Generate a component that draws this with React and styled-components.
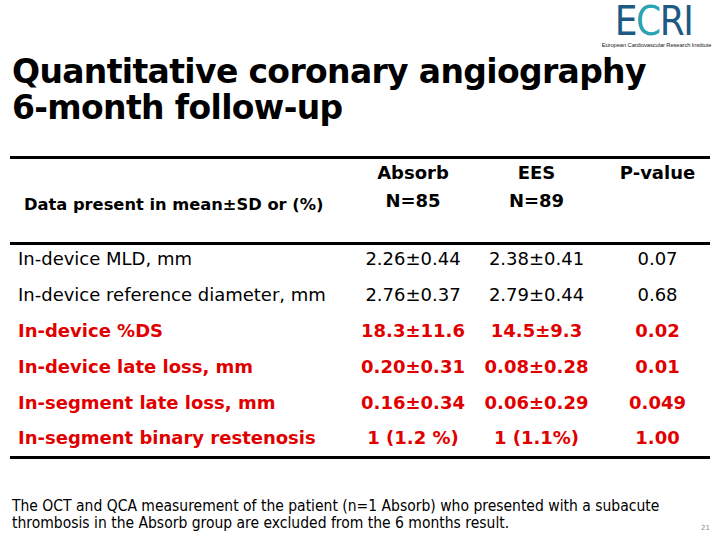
import React from "react"
import styled, { createGlobalStyle } from "styled-components"

const GlobalStyle = createGlobalStyle`
	body {
		margin: 0;
		background: #ffffff;
		font-family: "DejaVu Sans", Verdana, sans-serif;
	}
`

const headers = [
	{ name: "Absorb", n: "N=85" },
	{ name: "EES", n: "N=89" },
	{ name: "P-value", n: "" },
]

const rows = [
	{ label: "In-device MLD, mm", a: "2.26±0.44", b: "2.38±0.41", p: "0.07", hot: false },
	{ label: "In-device reference diameter, mm", a: "2.76±0.37", b: "2.79±0.44", p: "0.68", hot: false },
	{ label: "In-device %DS", a: "18.3±11.6", b: "14.5±9.3", p: "0.02", hot: true },
	{ label: "In-device late loss, mm", a: "0.20±0.31", b: "0.08±0.28", p: "0.01", hot: true },
	{ label: "In-segment late loss, mm", a: "0.16±0.34", b: "0.06±0.29", p: "0.049", hot: true },
	{ label: "In-segment binary restenosis", a: "1 (1.2 %)", b: "1 (1.1%)", p: "1.00", hot: true, short: true },
]

export default function App() {
	return (
		<>
			<GlobalStyle />
			<Page>
				<LogoBar>
					<Logo>
						<LogoWord>
							E<LogoC>C</LogoC>RI
						</LogoWord>
						<LogoSub>European Cardiovascular Research Institute</LogoSub>
					</Logo>
				</LogoBar>
				<Title>
					Quantitative coronary angiography
					<br />
					6-month follow-up
				</Title>
				<Table>
					<HeadRow>
						<HeadNote>Data present in mean±SD or (%)</HeadNote>
						{headers.map((h) => (
							<HeadCell key={h.name}>
								<span>{h.name}</span>
								<span>{h.n}</span>
							</HeadCell>
						))}
					</HeadRow>
					{rows.map((r) => (
						<Row key={r.label} $hot={r.hot} $short={r.short}>
							<Label>{r.label}</Label>
							<Value>{r.a}</Value>
							<Value>{r.b}</Value>
							<Value>{r.p}</Value>
						</Row>
					))}
				</Table>
				<Footer>
					<Note>
						The OCT and QCA measurement of the patient (n=1 Absorb) who presented with a subacute
						<br />
						thrombosis in the Absorb group are excluded from the 6 months result.
					</Note>
					<PageNum>21</PageNum>
				</Footer>
			</Page>
		</>
	)
}

const Page = styled.div`
	width: 720px;
	height: 540px;
	overflow: hidden;
	display: flex;
	flex-direction: column;
	color: #000;
`
const LogoBar = styled.div`
	display: flex;
	justify-content: flex-end;
	padding: 0 3px 0 0;
	height: 48px;
`
const Logo = styled.div`
	display: flex;
	flex-direction: column;
	align-items: center;
	width: 121px;
`
const LogoWord = styled.div`
	font-family: "DejaVu Sans Condensed", "DejaVu Sans", sans-serif;
	font-stretch: condensed;
	font-size: 40px;
	line-height: 42px;
	color: #1c5a84;
	letter-spacing: -1.5px;
	padding-right: 6px;
`
const LogoC = styled.span`
	color: #2aa3b3;
`
const LogoSub = styled.div`
	font-family: "Liberation Sans", sans-serif;
	font-size: 5.8px;
	line-height: 7px;
	letter-spacing: -0.1px;
	color: #222;
	white-space: nowrap;
`
const Title = styled.h1`
	margin: 6px 0 0 12px;
	font-family: "DejaVu Sans", sans-serif;
	font-weight: bold;
	font-size: 33px;
	line-height: 36px;
	letter-spacing: -0.65px;
`
const Table = styled.div`
	margin: 30px 10px 0 10px;
	border-top: 3px solid #000;
	border-bottom: 3px solid #000;
`
const HeadRow = styled.div`
	display: grid;
	grid-template-columns: 348px 110px 137px 105px;
	height: 83px;
	border-bottom: 3px solid #000;
	font-weight: bold;
`
const HeadNote = styled.div`
	align-self: end;
	padding: 0 0 28px 14px;
	font-size: 16.3px;
	white-space: nowrap;
`
const HeadCell = styled.div`
	display: flex;
	flex-direction: column;
	align-items: center;
	font-size: 18px;
	line-height: 28px;
`
const Row = styled.div`
	display: grid;
	grid-template-columns: 348px 110px 137px 105px;
	align-items: center;
	box-sizing: border-box;
	height: ${(p) => (p.$short ? "31px" : "36px")};
	padding-bottom: ${(p) => (p.$short ? "6px" : "10px")};
	color: ${(p) => (p.$hot ? "#e10000" : "#000")};
	font-weight: ${(p) => (p.$hot ? "bold" : "normal")};
	font-size: 18px;
`
const Label = styled.div`
	padding-left: 8px;
	white-space: nowrap;
`
const Value = styled.div`
	text-align: center;
	white-space: nowrap;
`
const Footer = styled.div`
	display: flex;
	align-items: flex-end;
	justify-content: space-between;
	padding: 39px 10px 0 12px;
`
const Note = styled.div`
	font-family: "DejaVu Sans Condensed", "DejaVu Sans", sans-serif;
	font-stretch: condensed;
	font-size: 15.5px;
	line-height: 17px;
	white-space: nowrap;
`
const PageNum = styled.div`
	font-size: 7px;
	color: #888;
	margin-bottom: 0;
`
